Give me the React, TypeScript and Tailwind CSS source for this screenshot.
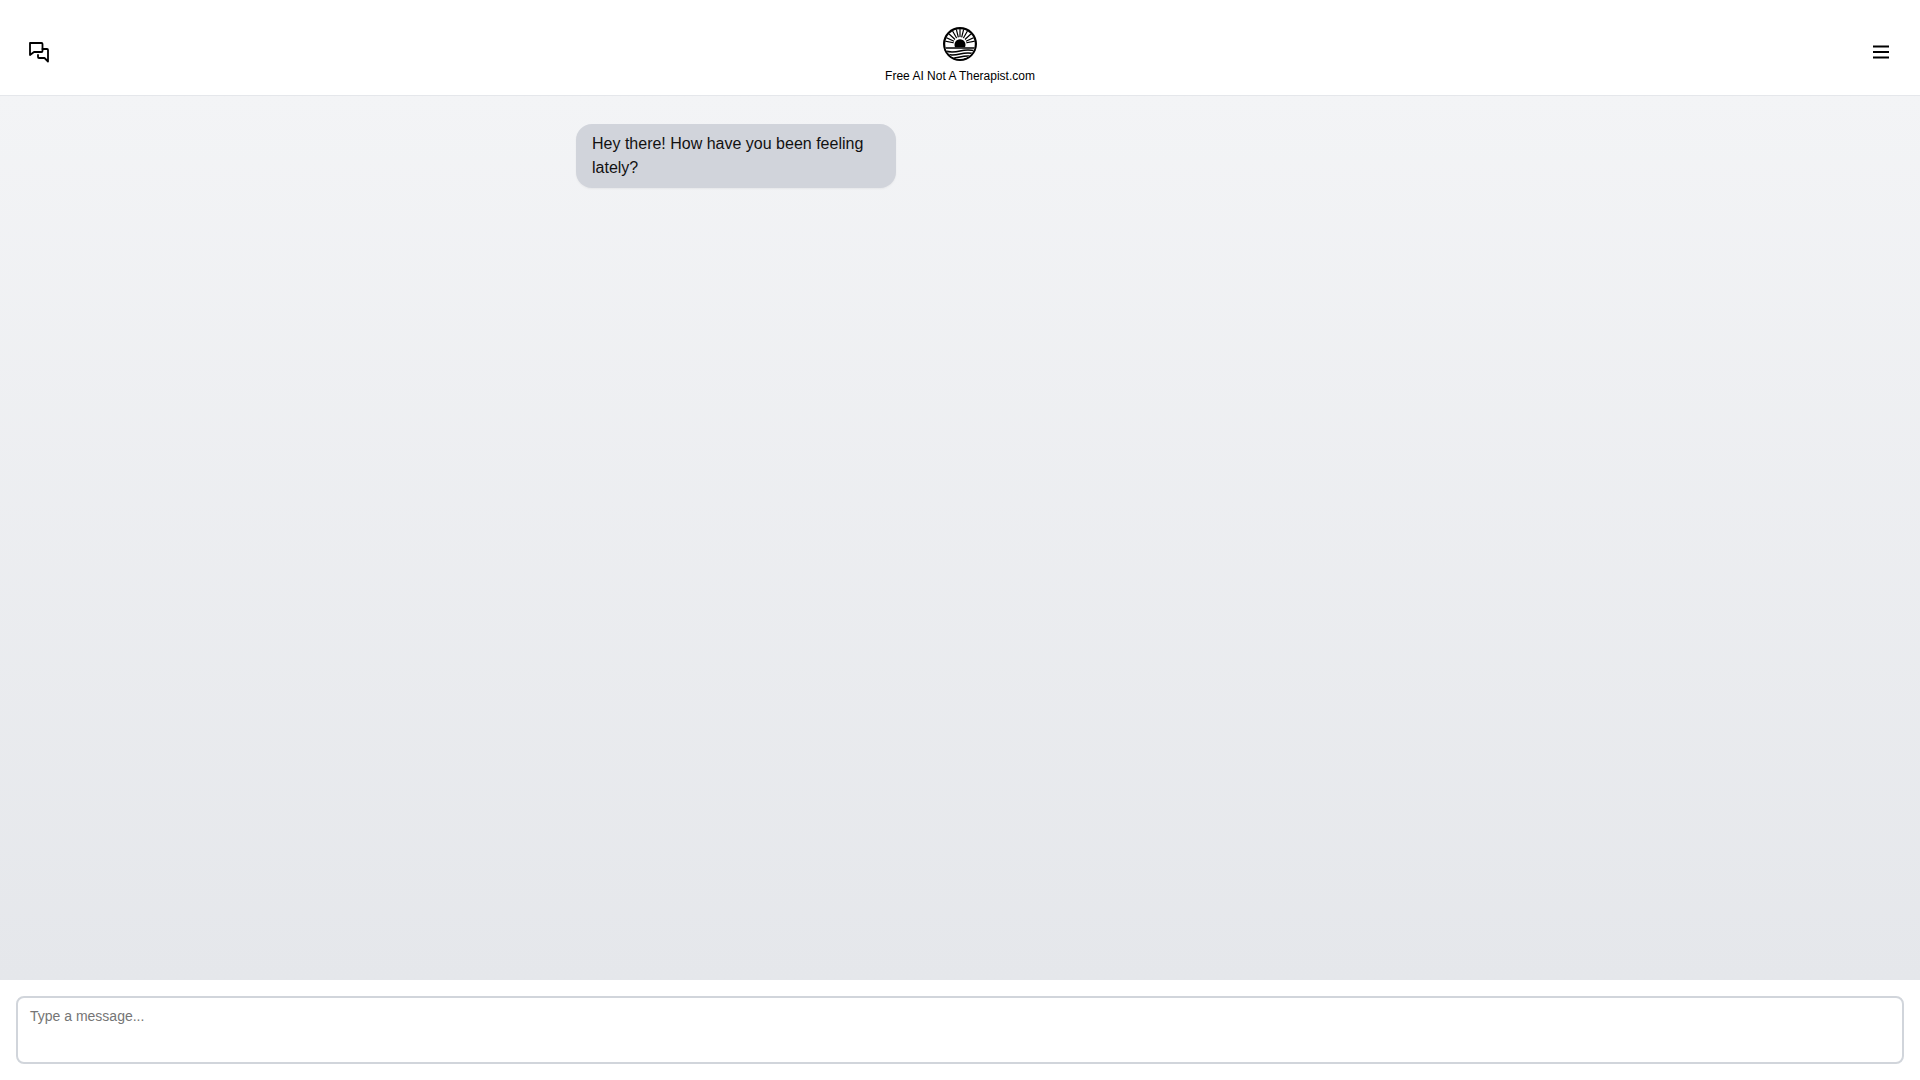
export default function App() {
  return (
    <div className="flex h-screen flex-col bg-white font-['Liberation_Sans',Arial,sans-serif] text-gray-900">
      <header className="flex h-[96px] shrink-0 items-center justify-between border-b border-gray-200 bg-white px-[27px] shadow-sm">
        <button className="mt-[8px] flex h-6 w-6 items-center justify-center text-black">
          <svg width="24" height="24" viewBox="0 0 24 24" fill="none" stroke="currentColor" strokeWidth="1.800" strokeLinejoin="round" strokeLinecap="round">
            <path d="M3 3h11.500c.5 0 1 .5 1 1v7c0 .5-.5 1-1 1H7l-4 3z" />
            <path d="M15.500 9H20c.5 0 1 .5 1 1v11.500L17.500 18H12c-.5 0-1-.5-1-1v-2" />
          </svg>
        </button>
        <div className="flex flex-col items-center pt-[16px]">
          <svg width="34" height="34" viewBox="0 0 34 34">
            <defs>
              <clipPath id="c"><circle cx="17" cy="17" r="15" /></clipPath>
            </defs>
            <circle cx="17" cy="17" r="17" fill="#000" />
            <circle cx="17" cy="17" r="14.800" fill="#fff" />
            <g stroke="#000" strokeWidth="1.200" clipPath="url(#c)">
              <path d="M17 17V1M17 17L13 1M17 17L21 1M17 17L9 3M17 17L25 3M17 17L5 6M17 17L29 6M17 17L2 10M17 17L32 10M17 17L1 14M17 17L33 14" />
            </g>
            <circle cx="17" cy="16.500" r="6.500" fill="#fff" />
            <path d="M12.200 20.500a5.500 5.500 0 1 1 9.600 0z" fill="#000" />
            <rect x="1" y="20.500" width="32" height="13" fill="#fff" clipPath="url(#c)" />
            <g clipPath="url(#c)" fill="none" stroke="#000" strokeWidth="1.700">
              <path d="M1 21h32" />
              <path d="M1 24q8 2 16 0t16 0" />
              <path d="M1 27q8 2 16 0t16 0" />
              <path d="M1 30q8 2 16 0t16 0" />
            </g>
          </svg>
          <span className="mt-[7px] text-xs leading-4 text-black">Free AI Not A Therapist.com</span>
        </div>
        <button className="mt-[8px] flex h-6 w-6 items-center justify-center text-black">
          <svg width="24" height="24" viewBox="0 0 24 24" fill="none" stroke="currentColor" strokeWidth="2">
            <path d="M4 6.500h16M4 12h16M4 17.500h16" />
          </svg>
        </button>
      </header>
      <main className="flex-1 overflow-hidden bg-gradient-to-b from-[#f3f4f6] to-[#e5e7eb] pt-7">
        <div className="mx-auto w-full max-w-3xl">
          <div className="w-[320px] rounded-2xl bg-[#d1d4db] px-4 py-2 text-base leading-6 text-[#111111] shadow-xs">
            Hey there! How have you been feeling lately?
          </div>
        </div>
      </main>
      <footer className="shrink-0 bg-white p-4">
        <textarea
          className="block h-[68px] w-full resize-none rounded-lg border-2 border-[#d1d5db] px-3 py-2 text-sm leading-5 outline-none placeholder:text-[#757575]"
          placeholder="Type a message..."
        />
      </footer>
    </div>
  );
}
